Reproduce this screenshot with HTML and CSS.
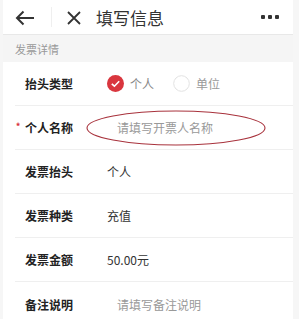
FILE: index.html
```html
<!DOCTYPE html>
<html lang="zh">
<head>
	<meta charset="UTF-8"/>
	<title>填写信息</title>
	<link rel="stylesheet" href="styles.css">
</head>
<body>
	<div class="page">
		<div class="topbar">
			<svg class="icon back" width="20" height="16" viewBox="0 0 20 16">
				<path d="M19 8H2M8.5 1.5L2 8l6.5 6.5" fill="none" stroke="#333" stroke-width="2"/>
			</svg>
			<span class="sep"></span>
			<svg class="icon close" width="14" height="14" viewBox="0 0 14 14">
				<path d="M1 1l12 12M13 1L1 13" fill="none" stroke="#333" stroke-width="1.8"/>
			</svg>
			<span class="title">填写信息</span>
			<span class="more"><i></i><i></i><i></i></span>
		</div>
		<div class="section">发票详情</div>
		<div class="list">
			<div class="row">
				<span class="label">抬头类型</span>
				<div class="radios">
					<span class="radio on">
						<svg width="17" height="17" viewBox="0 0 17 17">
							<circle cx="8.5" cy="8.5" r="8.5" fill="#d9363e"/>
							<path d="M4.8 8.8l2.6 2.4 4.8-5" fill="none" stroke="#fff" stroke-width="1.6"/>
						</svg>
						个人
					</span>
					<span class="radio">
						<svg width="17" height="17" viewBox="0 0 17 17">
							<circle cx="8.5" cy="8.5" r="7.8" fill="#fff" stroke="#e2e2e2" stroke-width="1"/>
						</svg>
						单位
					</span>
				</div>
			</div>
			<div class="row">
				<span class="label"><b class="star">*</b>个人名称</span>
				<span class="value hint">请填写开票人名称</span>
				<svg class="mark" width="184" height="38" viewBox="0 0 184 38">
					<ellipse cx="91" cy="19" rx="89" ry="17" fill="none" stroke="#a8323c" stroke-width="1.1"/>
				</svg>
			</div>
			<div class="row">
				<span class="label">发票抬头</span>
				<span class="value">个人</span>
			</div>
			<div class="row">
				<span class="label">发票种类</span>
				<span class="value">充值</span>
			</div>
			<div class="row">
				<span class="label">发票金额</span>
				<span class="value">50.00元</span>
			</div>
			<div class="row">
				<span class="label">备注说明</span>
				<span class="value hint">请填写备注说明</span>
			</div>
		</div>
	</div>
</body>
</html>
```

FILE: styles.css
```css
* { margin: 0; padding: 0; box-sizing: border-box; }
body {
	background-color: #f6f6f6;
	font-family: "Noto Sans CJK SC", "Noto Sans", sans-serif;
	color: #333;
}
.page {
	margin: 0 6px 0 3px;
	background-color: #f5f5f5;
}
.topbar {
	height: 35px;
	background-color: #fff;
	border-bottom: 1px solid #e8e8e8;
	display: flex;
	align-items: center;
	padding-left: 12px;
	padding-right: 14px;
}
.back { margin-top: 1px; }
.sep {
	width: 1px;
	height: 20px;
	background-color: #efefef;
	margin-left: 16px;
	margin-right: 15px;
}
.close { margin-top: 1px; }
.title {
	font-size: 17px;
	margin-left: 15px;
	color: #333;
	flex: 1;
}
.more {
	display: flex;
	gap: 3px;
}
.more i {
	width: 4px;
	height: 4px;
	background-color: #333;
	border-radius: 1px;
}
.section {
	height: 27px;
	line-height: 28px;
	padding-left: 12px;
	font-size: 11px;
	color: #999;
}
.list {
	background-color: #fff;
}
.row {
	position: relative;
	height: 44px;
	margin-left: 12px;
	border-bottom: 1px solid #efefef;
	display: flex;
	align-items: center;
}
.row:last-child { border-bottom: none; }
.label {
	position: relative;
	width: 92px;
	padding-left: 10px;
	font-size: 12px;
	font-weight: bold;
	color: #222;
}
.star {
	position: absolute;
	left: 1px;
	top: 1px;
	color: #d9363e;
	font-size: 8px;
}
.value {
	font-size: 12px;
	color: #333;
}
.hint {
	color: #999;
	padding-left: 10px;
}
.radios {
	display: flex;
	gap: 19px;
}
.radio {
	display: flex;
	align-items: center;
	gap: 6px;
	font-size: 12px;
	color: #999;
}
.radio.on { color: #888; }
.mark {
	position: absolute;
	left: 70px;
	top: 3px;
}
```
